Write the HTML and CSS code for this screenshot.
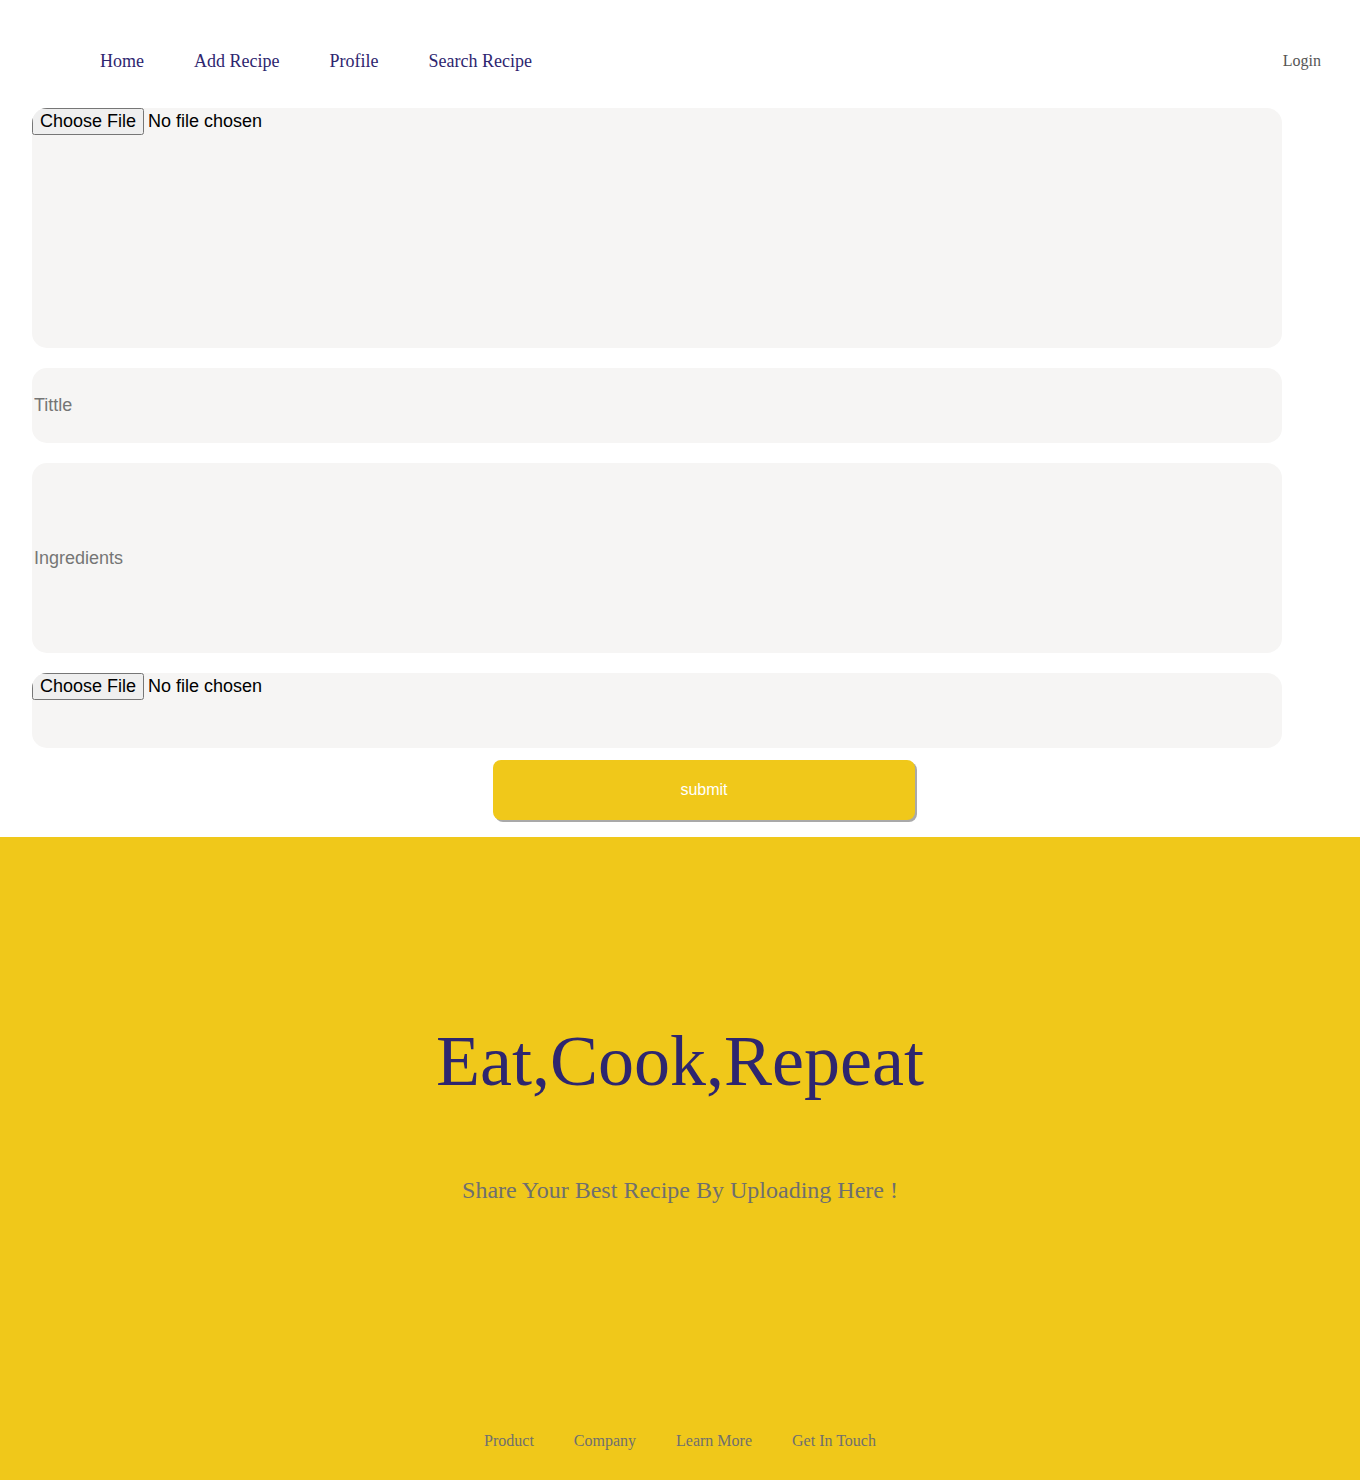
FILE: index.html
```html
<!DOCTYPE html>
<html lang="en">
<head>
<meta charset="utf-8">
<title>Add Recipe</title>
<link rel="stylesheet" href="styles.css">
</head>
<body>
<header class="header">
  <nav class="nav" aria-label="Main">
    <a href="#">Home</a>
    <a href="#">Add Recipe</a>
    <a href="#">Profile</a>
    <a href="#">Search Recipe</a>
  </nav>
  <a class="login" href="#">Login</a>
</header>
<main>
  <form class="recipe-form">
    <input class="field field-photo" type="file" aria-label="Recipe photo">
    <input class="field field-title" type="text" placeholder="Tittle" aria-label="Title">
    <input class="field field-ingredients" type="text" placeholder="Ingredients" aria-label="Ingredients">
    <input class="field field-video" type="file" aria-label="Recipe video">
    <button class="submit" type="submit">submit</button>
  </form>
</main>
<footer class="footer">
  <h1 class="slogan">Eat,Cook,Repeat</h1>
  <p class="tagline">Share Your Best Recipe By Uploading Here !</p>
  <nav class="footer-nav" aria-label="Footer">
    <a href="#">Product</a>
    <a href="#">Company</a>
    <a href="#">Learn More</a>
    <a href="#">Get In Touch</a>
  </nav>
</footer>
</body>
</html>
```
FILE: styles.css
```css
* {
  box-sizing: border-box;
}

body {
  margin: 0;
  background: #fff;
  font-family: "Liberation Serif", "Times New Roman", serif;
}

a {
  color: inherit;
  text-decoration: none;
}

.header {
  display: flex;
  justify-content: space-between;
  align-items: center;
  padding: 50px 39px 36px 100px;
  line-height: 22px;
}

.nav {
  display: flex;
  gap: 50px;
  font-size: 18px;
  color: #2e266f;
}

.login {
  font-size: 16px;
  color: #555;
}

.recipe-form {
  display: flex;
  flex-direction: column;
  padding: 0 78px 17px 32px;
}

.field {
  width: 100%;
  margin: 0 0 20px;
  padding: 0 2px;
  border: 0;
  border-radius: 15px;
  background: #f6f5f4;
  font-family: "Liberation Sans", Arial, sans-serif;
  font-size: 18px;
}

.field[type="file"] {
  padding: 0;
}

.field-photo {
  height: 240px;
}

.field-title {
  height: 75px;
}

.field-ingredients {
  height: 190px;
}

.field-video {
  height: 75px;
  margin-bottom: 12px;
}

.submit {
  width: 34%;
  max-width: 422px;
  height: 60px;
  margin-left: 461px;
  border: 0;
  border-radius: 8px;
  background: #f0c81a;
  box-shadow: 2px 2px #a9a9a9;
  color: #fff;
  font-family: "Liberation Sans", Arial, sans-serif;
  font-size: 16px;
}

.footer {
  padding: 179px 20px 30px;
  background: #f0c81a;
  text-align: center;
}

.slogan {
  margin: 0 0 66px;
  color: #2e266f;
  font-size: 72px;
  font-weight: 400;
  line-height: 90px;
}

.tagline {
  margin: 0 0 223px;
  color: #6f6f6f;
  font-size: 24px;
  line-height: 36px;
}

.footer-nav {
  display: flex;
  justify-content: center;
  gap: 40px;
  color: #6f6f6f;
  font-size: 16px;
  line-height: 20px;
}
```
